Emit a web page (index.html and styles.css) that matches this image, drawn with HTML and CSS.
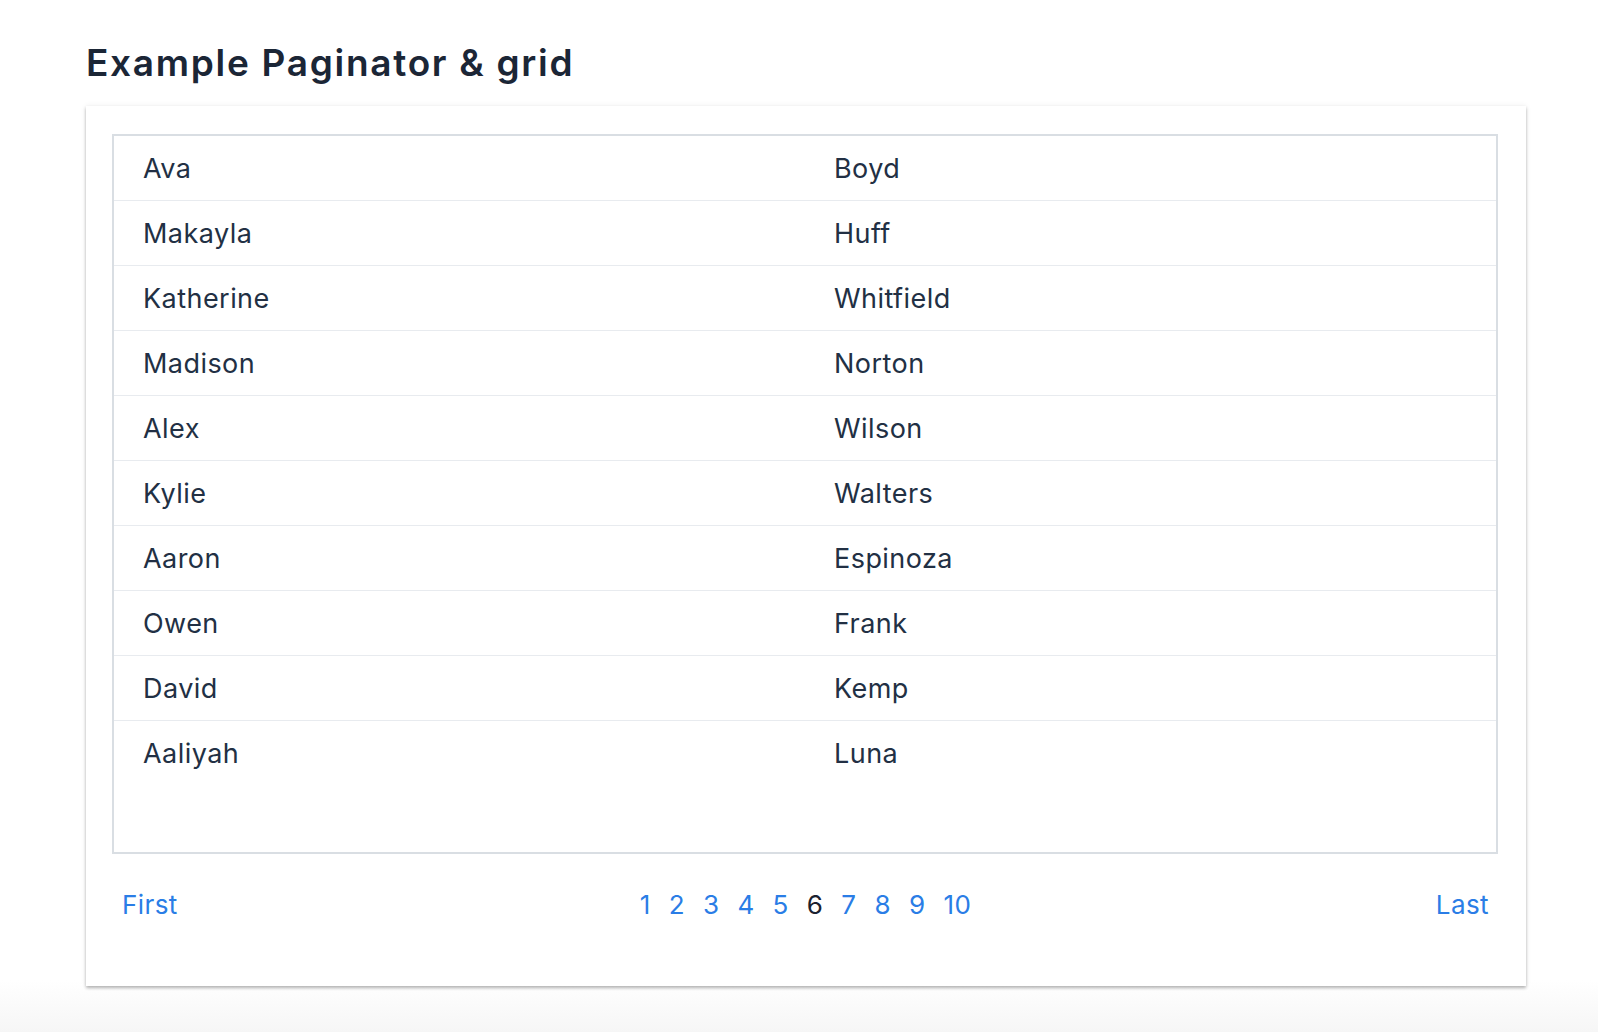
FILE: index.html
```html
<!DOCTYPE html>
<html lang="en">
<head>
<meta charset="utf-8">
<title>Example Paginator &amp; grid</title>
<link rel="stylesheet" href="styles.css">
</head>
<body>
<div class="page">
  <h1 class="title">Example Paginator &amp; grid</h1>
  <div class="card">
    <div class="grid">
      <div class="row"><div class="cell">Ava</div><div class="cell">Boyd</div></div>
      <div class="row"><div class="cell">Makayla</div><div class="cell">Huff</div></div>
      <div class="row"><div class="cell">Katherine</div><div class="cell">Whitfield</div></div>
      <div class="row"><div class="cell">Madison</div><div class="cell">Norton</div></div>
      <div class="row"><div class="cell">Alex</div><div class="cell">Wilson</div></div>
      <div class="row"><div class="cell">Kylie</div><div class="cell">Walters</div></div>
      <div class="row"><div class="cell">Aaron</div><div class="cell">Espinoza</div></div>
      <div class="row"><div class="cell">Owen</div><div class="cell">Frank</div></div>
      <div class="row"><div class="cell">David</div><div class="cell">Kemp</div></div>
      <div class="row"><div class="cell">Aaliyah</div><div class="cell">Luna</div></div>
    </div>
    <nav class="paginator">
      <a class="nav-link first" href="#">First</a>
      <div class="pages">
        <a class="page-link" href="#">1</a>
        <a class="page-link" href="#">2</a>
        <a class="page-link" href="#">3</a>
        <a class="page-link" href="#">4</a>
        <a class="page-link" href="#">5</a>
        <span class="page-link current">6</span>
        <a class="page-link" href="#">7</a>
        <a class="page-link" href="#">8</a>
        <a class="page-link" href="#">9</a>
        <a class="page-link" href="#">10</a>
      </div>
      <a class="nav-link last" href="#">Last</a>
    </nav>
  </div>
</div>
</body>
</html>
```
FILE: styles.css
```css
html, body {
  margin: 0;
  padding: 0;
}

body {
  min-height: 1032px;
  font-family: Inter, "Noto Sans", sans-serif;
  color: #223044;
  background: linear-gradient(to bottom, #ffffff 0, #ffffff 980px, #f6f6f6 1032px);
}

.page {
  width: 1440px;
  margin-left: 86px;
}

.title {
  margin: 42px 0 22px 0;
  font-size: 37px;
  line-height: 42px;
  font-weight: 600;
  color: #1b2636;
  letter-spacing: 1.7px;
}

.card {
  box-sizing: border-box;
  height: 880px;
  padding: 28px 28px 0 26px;
  background: #ffffff;
  box-shadow: 0 2px 3px rgba(0, 0, 0, 0.28), 0 0 6px rgba(0, 0, 0, 0.07);
}

.grid {
  box-sizing: border-box;
  height: 720px;
  border: 2px solid #d9dee3;
}

.row {
  display: grid;
  grid-template-columns: 1fr 1fr;
  height: 64px;
  border-bottom: 1px solid #e8ebef;
}

.row:last-child {
  border-bottom: none;
}

.cell {
  padding: 1px 0 0 29px;
  font-size: 27px;
  line-height: 64px;
  letter-spacing: 0.45px;
  color: #223044;
}

.paginator {
  display: grid;
  grid-template-columns: 1fr auto 1fr;
  align-items: center;
  margin-top: 35px;
  padding: 0 9px 0 10px;
  font-size: 26px;
  line-height: 32px;
  letter-spacing: 0.4px;
}

.nav-link,
.page-link {
  color: #2a7de6;
  text-decoration: none;
}

.first {
  justify-self: start;
}

.last {
  justify-self: end;
}

.pages {
  display: flex;
  gap: 18px;
}

.page-link.current {
  color: #1a2230;
}
```
